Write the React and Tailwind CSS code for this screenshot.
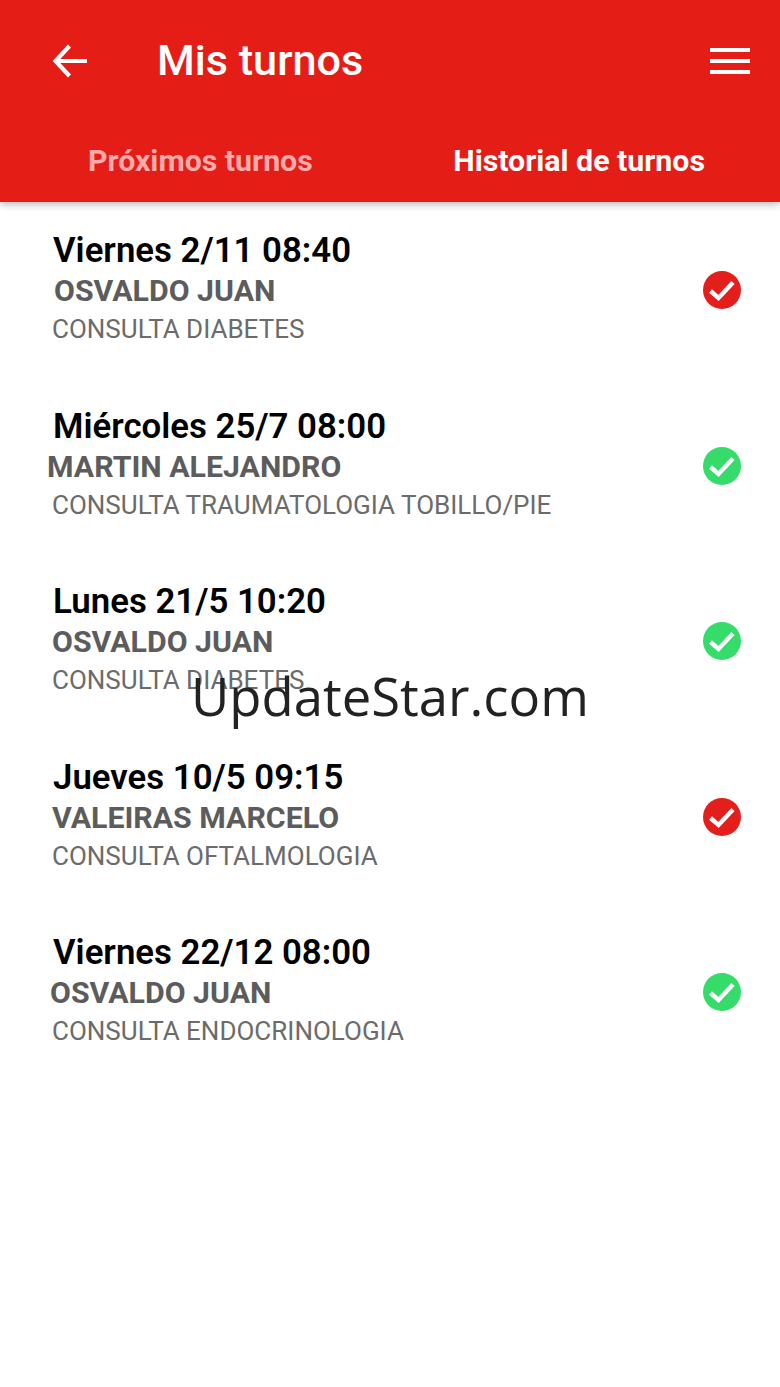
const TURNOS = [
  { date: 'Viernes 2/11 08:40', name: 'OSVALDO JUAN', nameClass: 'ml-[1px]', desc: 'CONSULTA DIABETES', ok: false },
  { date: 'Miércoles 25/7 08:00', name: 'MARTIN ALEJANDRO', nameClass: '-ml-[6px]', desc: 'CONSULTA TRAUMATOLOGIA TOBILLO/PIE', ok: true },
  { date: 'Lunes 21/5 10:20', name: 'OSVALDO JUAN', nameClass: '', desc: 'CONSULTA DIABETES', ok: true },
  { date: 'Jueves 10/5 09:15', name: 'VALEIRAS MARCELO', nameClass: '', desc: 'CONSULTA OFTALMOLOGIA', ok: false },
  { date: 'Viernes 22/12 08:00', name: 'OSVALDO JUAN', nameClass: '-ml-[3px]', desc: 'CONSULTA ENDOCRINOLOGIA', ok: true },
];

function StatusIcon({ ok }) {
  return (
    <svg width="38" height="38" viewBox="0 0 38 38" className="shrink-0">
      <circle cx="19" cy="19" r="19" fill={ok ? '#35dc6a' : '#e41e1a'} />
      <path d="M7.5 20l8 7L30 11.5" fill="none" stroke="#fff" strokeWidth="4.4" />
    </svg>
  );
}

export default function App() {
  return (
    <div className="relative w-[780px] h-[1387px] bg-white overflow-hidden font-['Roboto',sans-serif]">
      {/* Header */}
      <header className="h-[202px] bg-[#e41e17] shadow-[0_2px_8px_rgba(0,0,0,0.3)] relative">
        <div className="flex items-center h-[122px] pl-[52px] pr-[30px]">
          <svg width="36" height="36" viewBox="0 0 36 36" className="shrink-0">
            <path d="M35 18H4M17.5 3L3.5 18L17.5 33" fill="none" stroke="#fff" strokeWidth="4.2" />
          </svg>
          <h1 className="ml-[69px] text-[43.2px] font-medium text-white leading-none">Mis turnos</h1>
          <div className="ml-auto flex flex-col gap-[7px]">
            <span className="block w-[40px] h-[4px] bg-white" />
            <span className="block w-[40px] h-[4px] bg-white" />
            <span className="block w-[40px] h-[4px] bg-white" />
          </div>
        </div>
        <div className="flex justify-between h-[78px] pl-[88px] pr-[75px] text-[30.3px] font-bold leading-[78px]">
          <span className="text-[#fbaaac]">Próximos turnos</span>
          <span className="text-white">Historial de turnos</span>
        </div>
      </header>

      {/* Lista */}
      <main className="pt-[28px]">
        {TURNOS.map(t => (
          <div key={t.date} className="flex items-center h-[175.5px] pl-[53px] pr-[39px]">
            <div className="flex-1 h-full">
              <p className="text-[34.8px] font-semibold text-black leading-[40px]">{t.date}</p>
              <p className={`text-[30.3px] font-bold text-[#5c5c5c] leading-[36px] mt-[3px] -ml-[1px] ${t.nameClass}`}>{t.name}</p>
              <p className="text-[26px] text-[#6b6b6b] leading-[32px] mt-[4px] -ml-[1px]">{t.desc}</p>
            </div>
            <div className="self-start mt-[41px]">
              <StatusIcon ok={t.ok} />
            </div>
          </div>
        ))}
      </main>

      {/* Watermark */}
      <div className="absolute left-[191px] top-[663px] text-[52.6px] leading-[66px] text-[#222] font-['Open_Sans',sans-serif]">
        UpdateStar.com
      </div>
    </div>
  );
}
